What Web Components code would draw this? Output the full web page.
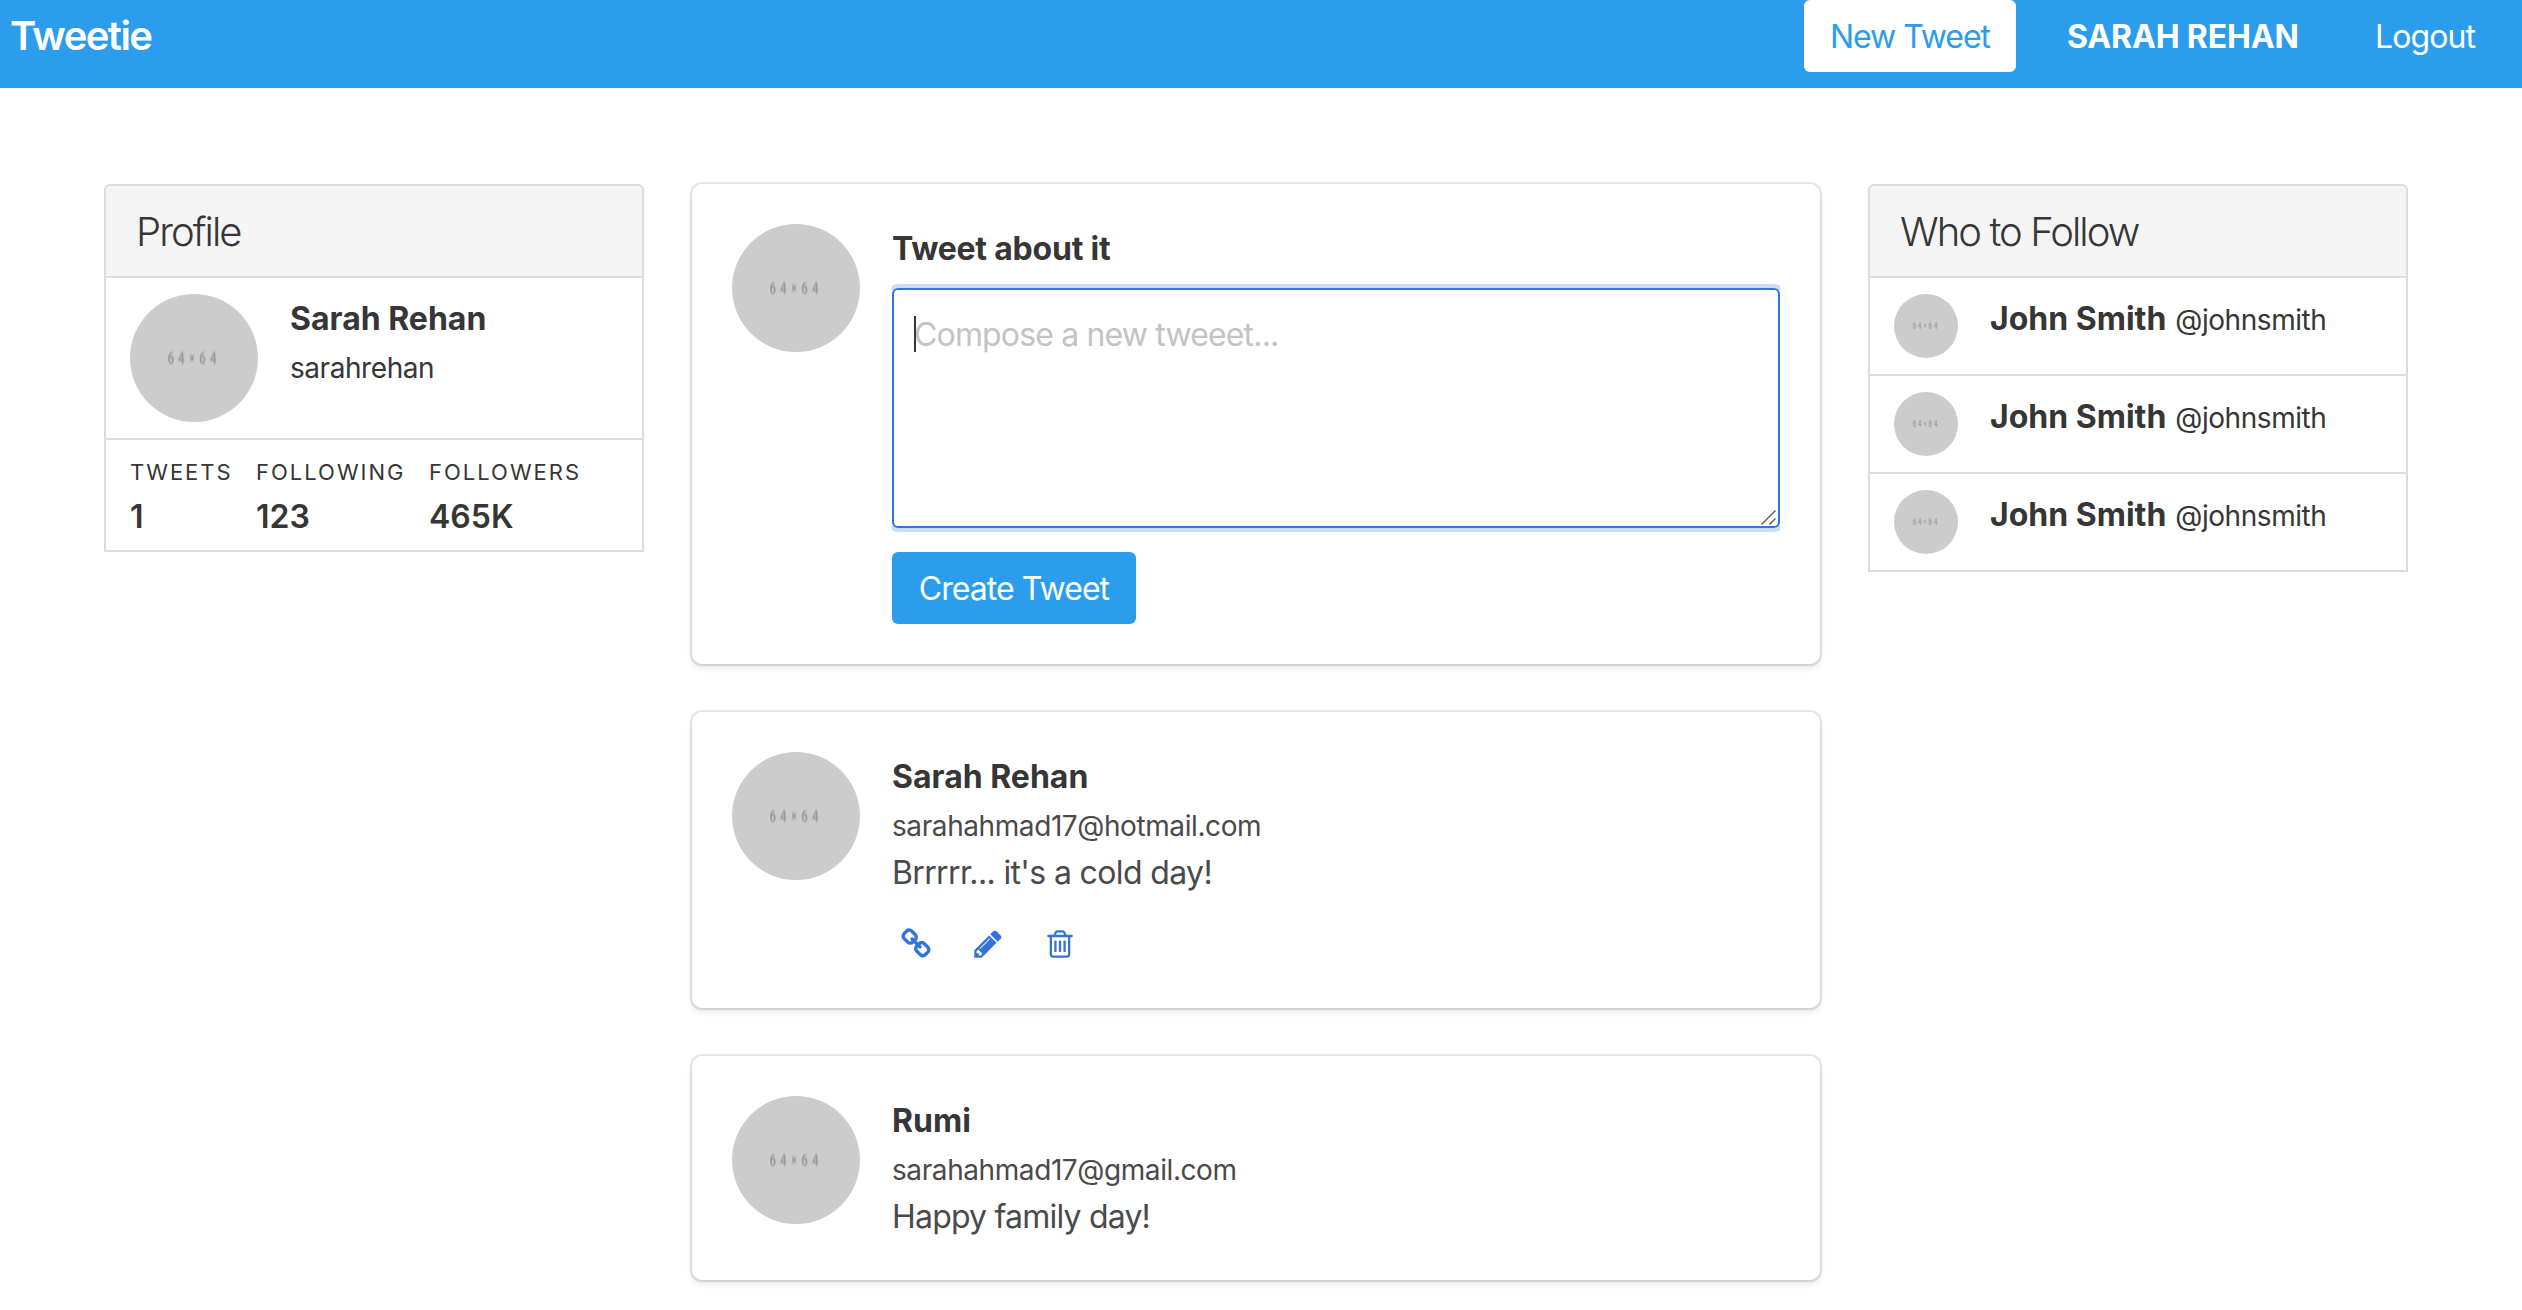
<!DOCTYPE html>
<html lang="en">
<head>
<meta charset="utf-8">
<title>Tweetie</title>
<style>
html,body{margin:0;background:#fff}
body{font:400 32px/48px Inter,"Liberation Sans",sans-serif;color:#4a4a4a;min-height:1310px;overflow:hidden}
</style>
</head>
<body>
<tweetie-app></tweetie-app>
<script>
const define = (name, html) => {
  const t = document.createElement('template');
  t.innerHTML = html;
  customElements.define(name, class extends HTMLElement {
    constructor() {
      super();
      this.attachShadow({mode: 'open'}).appendChild(t.content.cloneNode(true));
    }
  });
};

define('user-avatar', `
<style>
:host{display:block;flex:none;width:128px;height:128px;margin-right:32px}
:host([small]){width:64px;height:64px}
svg{display:block;width:100%;height:100%}
text{font:700 17px Roboto,"Liberation Sans",sans-serif;fill:#999;filter:blur(.8px)}
:host([small]) text{filter:none;fill:#a3a3a3}
.x{font-size:14px;font-weight:900}
</style>
<svg viewBox="0 0 128 128"><circle cx="64" cy="64" r="64" fill="#ccc"/>
<text transform="scale(.68 1)" y="70"><tspan x="55 70.6">64</tspan><tspan class="x" x="87.6" y="69">×</tspan><tspan x="101.8 117.6" y="70">64</tspan></text></svg>`);

define('nav-bar', `
<style>
:host{display:flex;height:88px;background:#2b9dec;color:#fff;align-items:flex-start;white-space:nowrap}
.brand{font-size:40px;font-weight:600;line-height:60px;letter-spacing:-1.58px;padding:6px 0 0 10px;flex:1}
.btn{box-sizing:border-box;width:212px;height:72px;background:#fff;color:#2b9dec;border-radius:6px;padding:13px 0 11px;text-align:center;letter-spacing:-1.06px}
.user{font-weight:700;padding:13px 0 0;width:230px;margin-left:51px;letter-spacing:-.15px}
.out{padding:13px 0 0;margin-left:78px;width:147px;letter-spacing:-.92px}
</style>
<div class="brand">Tweetie</div><div class="btn">New Tweet</div><div class="user">SARAH REHAN</div><div class="out">Logout</div>`);

define('side-panel', `
<style>
:host{display:block;color:#363636}
.head{background:#f5f5f5;border:2px solid #dbdbdb;border-radius:6px 6px 0 0;font-size:40px;font-weight:300;line-height:50px;letter-spacing:-1.94px;padding:21px 30px 19px}
</style>
<div class="head"><slot name="title"></slot></div><slot></slot>`);

define('panel-block', `
<style>
:host{display:flex;align-items:flex-start;border:2px solid #dbdbdb;border-top:0;padding:16px 24px;white-space:nowrap}
</style><slot></slot>`);

define('profile-name', `
<style>
:host{display:block;padding-top:1px}
strong{display:block;font-weight:700}
div{height:48px}
small{font-size:28px;letter-spacing:-.44px}
</style>
<strong><slot name="name"></slot></strong><div><small><slot name="handle"></slot></small></div>`);

define('follow-name', `
<style>
:host{display:block;padding-top:1px}
strong{font-weight:700}
small{font-size:28px;letter-spacing:-.44px;margin-left:9px}
</style>
<strong><slot name="name"></slot></strong><small><slot name="handle"></slot></small>`);

define('stat-item', `
<style>
:host{display:block}
.l{font-size:22px;line-height:33px;letter-spacing:2px;margin-bottom:10px}
.v{font-weight:600;line-height:36px;height:35px}
</style><div class="l"><slot name="label"></slot></div><div class="v"><slot></slot></div>`);

define('content-box', `
<style>
:host{display:flex;align-items:flex-start;background:#fff;border-radius:10px;padding:40px;box-shadow:0 4px 6px rgba(10,10,10,.1),0 0 0 2px rgba(10,10,10,.1)}
.body{flex:1;min-width:0}
</style><user-avatar></user-avatar><div class="body"><slot></slot></div>`);

define('tweet-composer', `
<style>
:host{display:block}
.t{font-weight:700;color:#363636;letter-spacing:-.22px;padding-top:1px;margin-bottom:11px}
.clip{overflow:hidden;padding:4px 0}
.area{position:relative;box-sizing:border-box;height:240px;border:2px solid #3273dc;border-radius:6px;padding:21px 20px 19px;box-shadow:0 0 0 4px rgba(50,115,220,.25);color:#c3c3c3;letter-spacing:-.84px}
.caret{position:absolute;left:20px;top:26px;width:2px;height:36px;background:#363636}
svg{position:absolute;right:2px;bottom:1px}
.btn{box-sizing:border-box;width:244px;height:72px;background:#2b9dec;color:#fff;border-radius:6px;padding:13px 0 11px;text-align:center;letter-spacing:-.95px;margin-top:20px}
</style>
<div class="t">Tweet about it</div>
<div class="clip"><div class="area"><span>Compose a new tweeet...</span><i class="caret"></i>
<svg width="16" height="16" viewBox="0 0 16 16" stroke="#555" stroke-width="1.4"><path d="M1.5 15.5 15.5 1.5M9.5 15.5l6-6"/></svg></div></div>
<div class="btn">Create Tweet</div>`);

define('tweet-text', `
<style>
:host{display:block;padding-top:1px;margin-bottom:-1px}
strong{display:block;font-weight:700;color:#363636}
.m{height:48px}
small{font-size:28px;letter-spacing:-.41px}
.p{letter-spacing:var(--message-tracking,-.8px)}
</style>
<strong><slot name="name"></slot></strong><div class="m"><small><slot name="mail"></slot></small></div><div class="p"><slot></slot></div>`);

define('tweet-actions', `
<style>
:host{display:flex;gap:24px;margin-top:24px}
span{width:48px;height:48px;display:flex;align-items:center;justify-content:center}
svg{width:32px;height:32px;fill:#3273dc}
</style>
<span><svg viewBox="0 0 1792 1792"><path d="M1520 1216q0-40-28-68l-208-208q-28-28-68-28-42 0-72 32 3 3 19 18.5t21.5 21.5 15 19 13 25.5 3.5 27.5q0 40-28 68t-68 28q-15 0-27.5-3.5t-25.5-13-19-15-21.5-21.5-18.5-19q-33 31-33 73 0 40 28 68l206 207q27 27 68 27 40 0 68-26l147-146q28-28 28-67zm-703-705q0-40-28-68l-206-207q-28-28-68-28-39 0-68 27l-147 146q-28 28-28 67 0 40 28 68l208 208q27 27 68 27 42 0 72-31-3-3-19-18.5t-21.5-21.5-15-19-13-25.5-3.5-27.5q0-40 28-68t68-28q15 0 27.5 3.5t25.5 13 19 15 21.5 21.5 18.5 19q33-31 33-73zm895 705q0 120-85 203l-147 146q-83 83-203 83-121 0-204-85l-206-207q-83-83-83-203 0-123 88-209l-88-88q-86 88-208 88-120 0-204-84l-208-208q-84-84-84-204t85-203l147-146q83-83 203-83 121 0 204 85l206 207q83 83 83 203 0 123-88 209l88 88q86-88 208-88 120 0 204 84l208 208q84 84 84 204z"/></svg></span>
<span><svg viewBox="0 0 1792 1792"><path d="M491 1536l91-91-235-235-91 91v107h128v128h107zm523-928q0-22-22-22-10 0-17 7l-542 542q-7 7-7 17 0 22 22 22 10 0 17-7l542-542q7-7 7-17zm-54-192l416 416-832 832h-416v-416zm683 96q0 53-37 90l-166 166-416-416 166-165q36-38 90-38 53 0 91 38l235 234q37 39 37 91z"/></svg></span>
<span><svg viewBox="0 0 1792 1792"><path d="M704 736v576q0 14-9 23t-23 9h-64q-14 0-23-9t-9-23v-576q0-14 9-23t23-9h64q14 0 23 9t9 23zm256 0v576q0 14-9 23t-23 9h-64q-14 0-23-9t-9-23v-576q0-14 9-23t23-9h64q14 0 23 9t9 23zm256 0v576q0 14-9 23t-23 9h-64q-14 0-23-9t-9-23v-576q0-14 9-23t23-9h64q14 0 23 9t9 23zm128 724v-948h-896v948q0 22 7 40.5t14.5 27 10.5 8.5h832q3 0 10.5-8.5t14.5-27 7-40.5zm-672-1076h448l-48-117q-7-9-17-11h-317q-10 2-17 11zm928 32v64q0 14-9 23t-23 9h-96v948q0 83-47 143.5t-113 60.5h-832q-66 0-113-58.5t-47-141.5v-952h-96q-14 0-23-9t-9-23v-64q0-14 9-23t23-9h309l70-167q15-37 54-63t79-26h320q40 0 79 26t54 63l70 167h309q14 0 23 9t9 23z"/></svg></span>`);

define('tweetie-app', `
<style>
:host{display:block}
main{display:grid;grid-template-columns:540px 1128px 540px;gap:48px;padding:96px 0 0 104px;align-items:start}
.feed{display:flex;flex-direction:column;gap:48px}
.stats stat-item:nth-child(1){width:126px}
.stats stat-item:nth-child(2){width:173px}
.cold{--message-tracking:-.64px}
</style>
<nav-bar></nav-bar>
<main>
<side-panel><span slot="title">Profile</span>
<panel-block><user-avatar></user-avatar><profile-name><span slot="name">Sarah Rehan</span><span slot="handle">sarahrehan</span></profile-name></panel-block>
<panel-block class="stats"><stat-item><span slot="label">TWEETS</span>1</stat-item><stat-item><span slot="label">FOLLOWING</span>123</stat-item><stat-item><span slot="label">FOLLOWERS</span>465K</stat-item></panel-block>
</side-panel>
<div class="feed">
<content-box><tweet-composer></tweet-composer></content-box>
<content-box><tweet-text class="cold"><span slot="name">Sarah Rehan</span><span slot="mail">sarahahmad17@hotmail.com</span>Brrrrr... it's a cold day!</tweet-text><tweet-actions></tweet-actions></content-box>
<content-box><tweet-text><span slot="name">Rumi</span><span slot="mail">sarahahmad17@gmail.com</span>Happy family day!</tweet-text></content-box>
</div>
<side-panel><span slot="title">Who to Follow</span>
<panel-block><user-avatar small></user-avatar><follow-name><span slot="name">John Smith</span><span slot="handle">@johnsmith</span></follow-name></panel-block>
<panel-block><user-avatar small></user-avatar><follow-name><span slot="name">John Smith</span><span slot="handle">@johnsmith</span></follow-name></panel-block>
<panel-block><user-avatar small></user-avatar><follow-name><span slot="name">John Smith</span><span slot="handle">@johnsmith</span></follow-name></panel-block>
</side-panel>
</main>`);
</script>
</body>
</html>
